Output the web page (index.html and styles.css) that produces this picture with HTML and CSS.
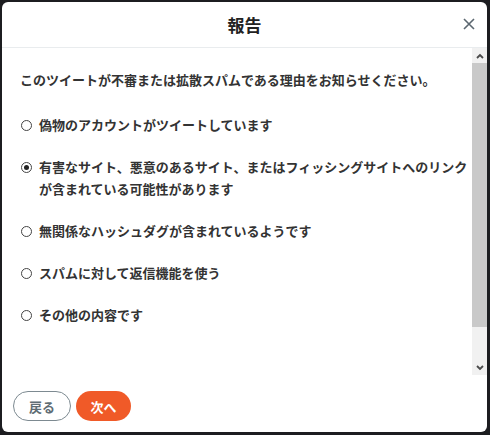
FILE: index.html
```html
<!DOCTYPE html>
<html lang="ja">
<head>
<meta charset="utf-8">
<title>報告</title>
<link rel="stylesheet" href="styles.css">
</head>
<body>
<div class="modal">
  <header class="modal-header">
    <h1 class="modal-title">報告</h1>
    <button class="close-btn" aria-label="閉じる">
      <svg width="12" height="12" viewBox="0 0 12 12"><path d="M1 1L11 11M11 1L1 11" stroke="#5b6770" stroke-width="1.6" fill="none"/></svg>
    </button>
  </header>
  <div class="modal-body">
    <div class="content">
      <p class="question">このツイートが不審または拡散スパムである理由をお知らせください。</p>
      <ul class="options">
        <li class="option"><span class="radio"></span><span class="label">偽物のアカウントがツイートしています</span></li>
        <li class="option"><span class="radio checked"></span><span class="label">有害なサイト、悪意のあるサイト、またはフィッシングサイトへのリンク<br>が含まれている可能性があります</span></li>
        <li class="option"><span class="radio"></span><span class="label">無関係なハッシュダグが含まれているようです</span></li>
        <li class="option"><span class="radio"></span><span class="label">スパムに対して返信機能を使う</span></li>
        <li class="option"><span class="radio"></span><span class="label">その他の内容です</span></li>
      </ul>
    </div>
    <div class="scrollbar">
      <div class="sb-btn">
        <svg width="8" height="6" viewBox="0 0 8 6"><path d="M1 5L4 2L7 5" stroke="#4a4a4a" stroke-width="1.8" fill="none"/></svg>
      </div>
      <div class="sb-thumb"></div>
      <div class="sb-track"></div>
      <div class="sb-btn">
        <svg width="8" height="6" viewBox="0 0 8 6"><path d="M1 1L4 4L7 1" stroke="#4a4a4a" stroke-width="1.8" fill="none"/></svg>
      </div>
    </div>
  </div>
  <footer class="modal-footer">
    <button class="btn btn-back">戻る</button>
    <button class="btn btn-next">次へ</button>
  </footer>
</div>
</body>
</html>
```
FILE: styles.css
```css
html, body {
  margin: 0;
  padding: 0;
}
body {
  background: #1c1d20;
  width: 490px;
  height: 435px;
  overflow: hidden;
  font-family: "Noto Sans CJK JP", "Noto Sans", sans-serif;
  color: #333;
}
.modal {
  margin: 2px 3px 0 2px;
  height: 430px;
  background: #fff;
  border-radius: 6px;
  display: flex;
  flex-direction: column;
  overflow: hidden;
}
.modal-header {
  position: relative;
  height: 45px;
  flex: 0 0 45px;
  border-bottom: 1px solid #e9ecee;
  display: flex;
  align-items: center;
  justify-content: center;
}
.modal-title {
  margin: 0;
  font-size: 17px;
  font-weight: 700;
  color: #222;
  line-height: 1;
}
.close-btn {
  position: absolute;
  right: 12px;
  top: 16px;
  width: 12px;
  height: 12px;
  padding: 0;
  border: 0;
  background: none;
  display: flex;
}
.modal-body {
  flex: 0 0 327px;
  display: flex;
}
.content {
  flex: 1;
  padding: 21px 0 0 18px;
}
.question {
  margin: 0;
  font-size: 13px;
  font-weight: 700;
  line-height: 22px;
}
.options {
  list-style: none;
  margin: 23px 0 0;
  padding: 0;
  display: flex;
  flex-direction: column;
  gap: 20px;
}
.option {
  display: flex;
  align-items: flex-start;
  font-size: 13px;
  font-weight: 700;
  line-height: 22px;
}
.radio {
  box-sizing: border-box;
  width: 11px;
  height: 11px;
  margin: 6px 7px 0 1px;
  border: 1px solid #444;
  border-radius: 50%;
  flex: 0 0 11px;
  display: flex;
  align-items: center;
  justify-content: center;
}
.radio.checked::after {
  content: "";
  width: 5px;
  height: 5px;
  border-radius: 50%;
  background: #222;
}
.scrollbar {
  width: 15px;
  flex: 0 0 15px;
  display: flex;
  flex-direction: column;
  background: #f1f1f1;
}
.sb-btn {
  height: 15px;
  flex: 0 0 15px;
  display: flex;
  align-items: center;
  justify-content: center;
}
.sb-thumb {
  flex: 0 0 264px;
  background: #c9c9c9;
}
.sb-track {
  flex: 1;
}
.modal-footer {
  flex: 1;
  display: flex;
  gap: 5px;
  padding: 16px 0 0 11px;
}
.btn {
  height: 30px;
  border-radius: 15px;
  font-family: inherit;
  font-size: 13px;
  font-weight: 700;
  padding: 0;
  cursor: pointer;
}
.btn-back {
  width: 58px;
  background: #fff;
  border: 1px solid #7d8a91;
  color: #5f6d74;
}
.btn-next {
  width: 55px;
  background: #f05a28;
  border: 0;
  color: #fff;
}
```
